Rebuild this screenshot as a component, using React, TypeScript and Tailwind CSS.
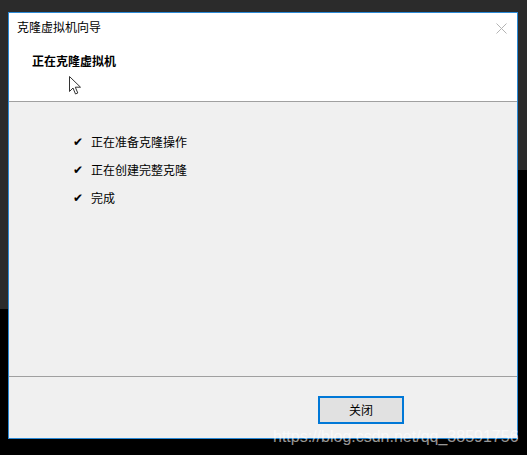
export default function App() {
  const steps = ["正在准备克隆操作", "正在创建完整克隆", "完成"];
  const cjk = { fontFamily: '"Noto Sans CJK SC", "Noto Sans", sans-serif' };

  return (
    <div className="relative w-[527px] h-[455px] overflow-hidden bg-black" style={cjk}>
      {/* desktop windows behind */}
      <div className="absolute left-0 top-0 w-[527px] h-[170px] bg-[#2b2b2b]" />
      <div className="absolute left-0 top-0 w-[260px] h-[309px] bg-[#2b2b2b]" />

      {/* dialog */}
      <div className="absolute left-[8px] top-[12px] w-[510px] h-[427px] border border-[#2b8ad6] flex flex-col bg-[#f0f0f0]">
        <div className="h-[89px] shrink-0 bg-white border-b border-[#a0a0a0] flex flex-col">
          <div className="flex items-center justify-between pl-[8px] pr-[10px] pt-[6px] h-[22px]">
            <span className="text-[12px] leading-[16px] text-black">克隆虚拟机向导</span>
            <svg width="11" height="11" viewBox="0 0 11 11" className="mt-[2px]">
              <path d="M0.5 0.5 L10.5 10.5 M10.5 0.5 L0.5 10.5" stroke="#b4b4b4" strokeWidth="1" fill="none" />
            </svg>
          </div>
          <div className="pl-[23px] pt-[18px] text-[12px] leading-[16px] font-bold text-black">正在克隆虚拟机</div>
        </div>

        <div className="h-[275px] shrink-0 border-b border-[#a0a0a0] pt-[32px] pl-[64px] flex flex-col gap-[12px]">
          {steps.map((s) => (
            <div key={s} className="flex items-center h-[16px] text-[12px] leading-[16px] text-black">
              <span className="w-[18px] text-[12px] font-bold" style={{ fontFamily: '"DejaVu Sans", sans-serif' }}>✔</span>
              <span>{s}</span>
            </div>
          ))}
        </div>

        <div className="flex-1 flex justify-end items-start pt-[19px] pr-[113px]">
          <button className="w-[86px] h-[28px] bg-[#e1e1e1] border-2 border-[#0078d7] text-[12px] text-black">关闭</button>
        </div>
      </div>

      {/* mouse cursor */}
      <svg className="absolute left-[69px] top-[76px]" width="13" height="19" viewBox="0 0 13 19">
        <path d="M0.5 0.5 L0.5 15.5 L4 12 L6.5 18 L8.8 17 L6.3 11.2 L11.5 11.2 Z" fill="white" stroke="#333" strokeWidth="1" strokeLinejoin="round" />
      </svg>

      {/* watermark */}
      <div
        className="absolute left-[273px] top-[427px] text-[16px] leading-[20px] text-white/60 whitespace-nowrap"
        style={{ fontFamily: '"Liberation Sans", Arial, sans-serif' }}
      >
        https://blog.csdn.net/qq_38591756
      </div>
    </div>
  );
}
